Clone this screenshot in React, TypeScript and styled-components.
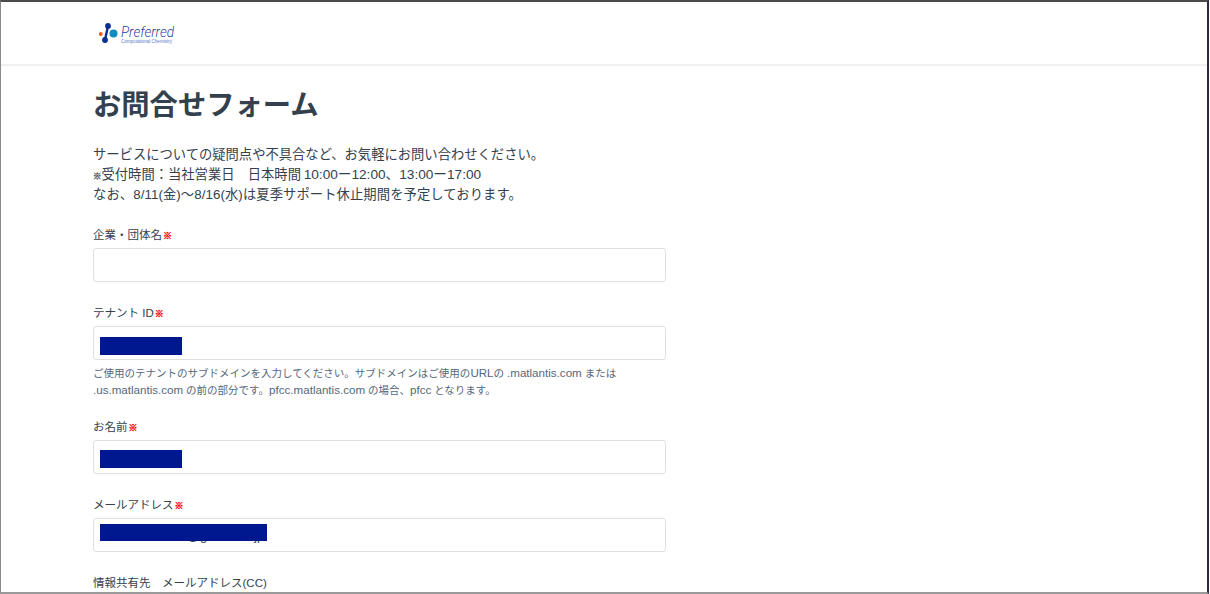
import React from "react";
import styled, { createGlobalStyle } from "styled-components";

const Global = createGlobalStyle`
  html, body { margin: 0; padding: 0; background: #fff; }
  body { font-family: "Liberation Sans", "Noto Sans CJK JP", sans-serif; color: #33414e; }
  * { box-sizing: border-box; }
`;
const Frame = styled.div`
  width: 1209px; height: 594px; overflow: hidden; background: #fff;
  border-top: 2px solid #4a4a4a; border-left: 1px solid #8a8a8a;
  border-right: 2px solid #2c2450; border-bottom: 2px solid #9a9a9a;
`;
const Header = styled.header`
  height: 64px; border-bottom: 2px solid #eff0f1; padding: 19px 0 0 97px;
`;
const Main = styled.main`
  width: 573px; margin-left: 92px;
`;
const Title = styled.h1`
  margin: 19px 0 0; font-size: 28.3px; line-height: 40px; height: 40px; font-weight: 700; color: #33414e;
`;
const Intro = styled.div`
  margin-top: 20px; font-size: 13.3px; color: #33414e;
`;
const IntroLine = styled.div<{ $spacing?: number }>`
  height: 20px; line-height: 20px; white-space: nowrap; letter-spacing: ${p => p.$spacing ?? 0}px;
`;
const Mark = styled.span`
  font-size: 8.5px; -webkit-text-stroke: 0.3px #33414e;
`;
const Hours = styled.span`
  font-size: 13.65px; margin-left: -1px;
`;
const Field = styled.div<{ $gap: number }>`
  margin-top: ${p => p.$gap}px;
`;
const Label = styled.label`
  display: block; height: 17px; font-size: 11.5px; line-height: 17px; color: #33414e; margin-bottom: 4px; white-space: nowrap;
`;
const Req = styled.span`
  color: #ff0000; font-size: 9px; font-weight: 700; margin-left: 1px; -webkit-text-stroke: 0.4px #ff0000;
`;
const InputWrap = styled.div`
  position: relative; height: 34px;
`;
const Input = styled.input`
  display: block; width: 100%; height: 100%; padding: 0 6px; border: 1px solid #dfe1e4; border-radius: 3px;
  background: #fff; font: 13px "Liberation Sans", sans-serif; color: #33414e; outline: none;
`;
const Redaction = styled.div<{ $w: number; $top: number; $h: number }>`
  position: absolute; left: 7px; top: ${p => p.$top}px; width: ${p => p.$w}px; height: ${p => p.$h}px; background: #00188f;
`;
const Help = styled.div`
  margin-top: 4px; font-size: 10.5px; color: #54687c;
`;
const HelpLine = styled.div`
  height: 17px; line-height: 17px; white-space: nowrap;
`;
const HelpLatin = styled.span`
  font-size: 11.6px;
`;

const Logo = () => (
  <svg width="90" height="24" viewBox="0 0 90 24" aria-label="Preferred Computational Chemistry">
    <path d="M10 5 L7 19" stroke="#0b2f8f" strokeWidth="2.4" />
    <circle cx="10" cy="5" r="2.9" fill="#0b2f8f" />
    <circle cx="7" cy="19" r="2.9" fill="#0b2f8f" />
    <circle cx="15.5" cy="12.5" r="4" fill="#0f8cc0" />
    <circle cx="2.8" cy="13" r="1.9" fill="#ef5a1c" />
    <text x="23" y="16" fontFamily="Roboto, sans-serif" fontWeight="300" fontStyle="italic" fontSize="15" textLength="53" lengthAdjust="spacingAndGlyphs" fill="#1f3f9e">Preferred</text>
    <text x="23" y="21.5" fontFamily="'Liberation Sans', sans-serif" fontSize="4.6" textLength="51" lengthAdjust="spacingAndGlyphs" fill="#5a7ac8">Computational Chemistry</text>
  </svg>
);

export default function App() {
  return (
    <>
      <Global />
      <Frame>
        <Header><Logo /></Header>
        <Main>
          <Title>お問合せフォーム</Title>
          <Intro>
            <IntroLine>サービスについての疑問点や不具合など、お気軽にお問い合わせください。</IntroLine>
            <IntroLine><Mark>※</Mark>受付時間：当社営業日　日本時間 <Hours>10:00ー12:00、13:00ー17:00</Hours></IntroLine>
            <IntroLine $spacing={0.09}>なお、8/11(金)〜8/16(水)は夏季サポート休止期間を予定しております。</IntroLine>
          </Intro>
          <Field $gap={22}>
            <Label>企業・団体名<Req>※</Req></Label>
            <InputWrap><Input /></InputWrap>
          </Field>
          <Field $gap={23}>
            <Label>テナント ID<Req>※</Req></Label>
            <InputWrap><Input /><Redaction $w={82} $top={11} $h={18} /></InputWrap>
            <Help>
              <HelpLine>ご使用のテナントのサブドメインを入力してください。サブドメインはご使用の<HelpLatin>URL</HelpLatin>の <HelpLatin>.matlantis.com</HelpLatin> または</HelpLine>
              <HelpLine><HelpLatin>.us.matlantis.com</HelpLatin> の前の部分です。<HelpLatin>pfcc.matlantis.com</HelpLatin> の場合、<HelpLatin>pfcc</HelpLatin> となります。</HelpLine>
            </Help>
          </Field>
          <Field $gap={21}>
            <Label>お名前<Req>※</Req></Label>
            <InputWrap><Input /><Redaction $w={82} $top={10} $h={18} /></InputWrap>
          </Field>
          <Field $gap={23}>
            <Label>メールアドレス<Req>※</Req></Label>
            <InputWrap>
              <Input readOnly value="aaaaaaaaaaaa@gaaaaaa.jp" />
              <Redaction $w={167} $top={6} $h={17} />
            </InputWrap>
          </Field>
          <Field $gap={23}>
            <Label>情報共有先　メールアドレス(CC)</Label>
          </Field>
        </Main>
      </Frame>
    </>
  );
}
